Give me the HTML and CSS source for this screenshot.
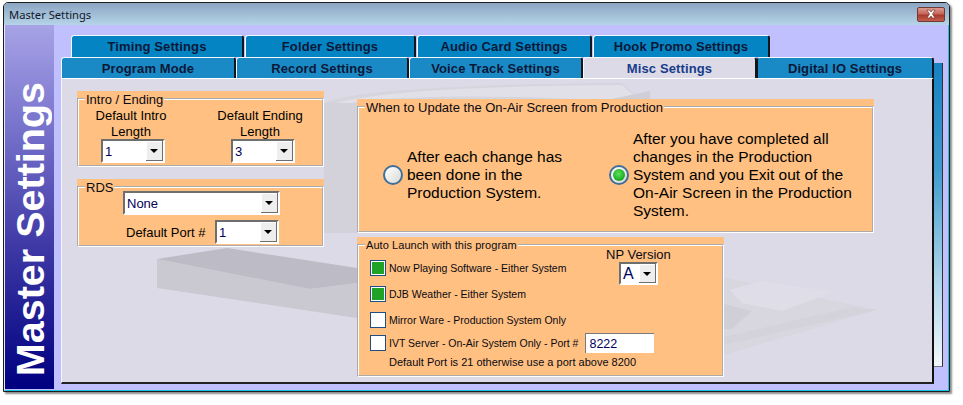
FILE: index.html
```html
<!DOCTYPE html>
<html lang="en">
<head>
<meta charset="utf-8">
<title>Master Settings</title>
<link rel="stylesheet" href="styles.css">
</head>
<body>
<div class="window">
  <div class="titlebar">
    <span class="title">Master Settings</span>
    <div class="close"><svg width="18" height="10" viewBox="0 0 18 10"><path d="M5 1h2.500L9 3l1.500-2H13l-2.500 4L13 9h-2.500L9 7 7.500 9H5l2.500-4z" fill="#fff" stroke="#7a3a34" stroke-width=".7"/></svg></div>
  </div>
  <div class="client">
    <div class="band"><span class="band-text">Master Settings</span></div>
    <div class="tabarea">
      <div class="strip"></div>
      <div class="tabrow back">
        <div class="tab t1">Timing Settings</div>
        <div class="tab t2">Folder Settings</div>
        <div class="tab t3">Audio Card Settings</div>
        <div class="tab t4">Hook Promo Settings</div>
      </div>
      <div class="tabrow front">
        <div class="tab f1">Program Mode</div>
        <div class="tab f2">Record Settings</div>
        <div class="tab f3">Voice Track Settings</div>
        <div class="tab f4 active">Misc Settings</div>
        <div class="tab f5">Digital IO Settings</div>
      </div>
      <div class="panel">
        <svg class="watermark" width="872" height="304" viewBox="0 0 872 304">
          <path d="M262 24 Q300 6 560 4 L600 40 L262 60 Z" fill="#d6d5de"/>
          <path d="M262 30 Q290 8 560 6 L580 24 Q400 12 300 22 Z" fill="#e1e0e9"/>
          <path d="M262 24 h34 v130 h-34z" fill="#d3d2da"/>
          <path d="M540 22 L588 12 L590 60 L540 60 Z" fill="#cfced7"/>
          <path d="M95 180 L248 210 L295 204 V239 L95 209 Z" fill="#cac8d0"/>
          <path d="M95 180 L165 169 L295 189 V204 L248 210 Z" fill="#bdbbc5"/>
          <path d="M662 198 L815 231 L662 276 Z" fill="#d8d7e0"/>
          <path d="M662 266 L815 231 L790 228 L662 258 Z" fill="#d4d3dc"/>
          <path d="M668 211 L700 202 L770 213 L720 232 L680 224 Z" fill="#dfdee8"/>
          <path d="M662 225 L690 232 L670 250 L662 250 Z" fill="#d0cfd8"/>
        </svg>
        <div class="panel-body">
          <div class="col-left">
            <div class="group intro-group">
              <fieldset class="box">
                <legend class="legend">Intro / Ending</legend>
                <div class="intro">
                  <div class="intro-col">
                    <div class="intro-label">Default Intro<br>Length</div>
                    <div class="combo small"><span class="combo-value">1</span><span class="arrow"></span></div>
                  </div>
                  <div class="intro-col">
                    <div class="intro-label">Default Ending<br>Length</div>
                    <div class="combo small second"><span class="combo-value">3</span><span class="arrow"></span></div>
                  </div>
                </div>
              </fieldset>
            </div>
            <div class="group rds">
              <fieldset class="box">
                <legend class="legend">RDS</legend>
                <div class="rds-body">
                  <div class="combo wide"><span class="combo-value">None</span><span class="arrow"></span></div>
                  <div class="port-row">
                    <span class="port-label">Default Port #</span>
                    <div class="combo small"><span class="combo-value">1</span><span class="arrow"></span></div>
                  </div>
                </div>
              </fieldset>
            </div>
          </div>
          <div class="col-right">
            <div class="group when">
              <fieldset class="box">
                <legend class="legend">When to Update the On-Air Screen from Production</legend>
                <div class="options">
                  <div class="option">
                    <span class="radio"></span>
                    <span class="option-text">After each change has been done in the Production System.</span>
                  </div>
                  <div class="option">
                    <span class="radio on"></span>
                    <span class="option-text">After you have completed all changes in the Production System and you Exit out of the On-Air Screen in the Production System.</span>
                  </div>
                </div>
              </fieldset>
            </div>
            <div class="group auto">
              <fieldset class="box">
                <legend class="legend auto-legend">Auto Launch with this program</legend>
                <div class="auto-grid">
                  <div class="check-row"><span class="check on"></span><span>Now Playing Software - Either System</span></div>
                  <div class="np">
                    <div class="np-label">NP Version</div>
                    <div class="combo np-combo"><span class="combo-value">A</span><span class="arrow"></span></div>
                  </div>
                  <div class="check-row"><span class="check on"></span><span>DJB Weather - Either System</span></div>
                  <div class="check-row full"><span class="check"></span><span>Mirror Ware - Production System Only</span></div>
                  <div class="check-row full"><span class="check"></span><span>IVT Server - On-Air System Only - Port #</span><span class="port-input">8222</span></div>
                  <div class="note">Default Port is 21 otherwise use a port above 8200</div>
                </div>
              </fieldset>
            </div>
          </div>
        </div>
      </div>
    </div>
  </div>
</div>
</body>
</html>
```
FILE: styles.css
```css
* { box-sizing: border-box; }
html, body { margin: 0; padding: 0; background: #fff; }
body { width: 963px; height: 405px; overflow: hidden; font-family: "Liberation Sans", Arial, sans-serif; color: #000; }

.window {
  margin: 2px 0 0 3px;
  width: 947px;
  height: 390px;
  border: 1px solid #1c1c1c;
  border-radius: 5px 5px 0 0;
  box-shadow: 2px 2px 2px rgba(0,0,0,.45);
  display: flex;
  flex-direction: column;
  overflow: hidden;
}
.titlebar {
  height: 22px;
  flex: none;
  display: flex;
  align-items: center;
  padding: 0 4px 0 5px;
  background: linear-gradient(#8ba5c2, #b6d4e8);
}
.title { font: 11.200px "Noto Sans", sans-serif; color: #10182a; }
.close {
  margin-left: auto;
  width: 28px;
  height: 15px;
  border: 1px solid #6e3a36;
  border-radius: 2px;
  background: linear-gradient(#dd9a90 0%, #c5675c 45%, #a83a2c 55%, #c4604f 100%);
  display: flex;
  align-items: center;
  justify-content: center;
}
.client {
  flex: 1;
  display: flex;
  background: #c0c0ff;
  border-left: 1px solid #e8e8f8;
  border-right: 1px solid #16c4e6;
  border-bottom: 1px solid #16c4e6;
  min-height: 0;
}
.band {
  width: 49px;
  flex: none;
  margin-bottom: 1px;
  background: linear-gradient(#a7a3e6 0%, #7d78cf 25%, #3f3aa6 60%, #000080 100%);
  display: flex;
  justify-content: center;
  align-items: flex-end;
  padding-bottom: 13px;
}
.band-text {
  writing-mode: vertical-rl;
  transform: rotate(180deg);
  font-weight: bold;
  font-size: 39.500px;
  line-height: 44px;
  color: #fff;
  white-space: nowrap;
}
.tabarea {
  position: relative;
  flex: 1;
  padding: 10px 0 0 7px;
}
.strip {
  position: absolute;
  left: 880px;
  top: 38px;
  width: 9px;
  height: 304px;
  background: linear-gradient(#1681c2, #3f9bcf 35%, #a8d3e9 70%, #f2f8fb);
  border-right: 1px solid #333;
  border-bottom: 1px solid #777;
}
.tabrow { display: flex; position: relative; }
.back { height: 22px; padding-left: 10px; gap: 1px; }
.front { height: 21px; }
.tab {
  font-weight: bold;
  font-size: 13px;
  letter-spacing: .12px;
  color: #0a1838;
  display: flex;
  align-items: center;
  justify-content: center;
  border-top: 1px solid #f4f8fc;
  border-left: 1px solid #f4f8fc;
  border-right: 2px solid #14141c;
  border-radius: 3px 3px 0 0;
}
.back .tab { background: #0584c4; }
.front .tab { background: #1a8ac6; }
.t1 { width: 173px; }
.t2 { width: 171px; }
.t3 { width: 175px; }
.t4 { width: 177px; }
.f1 { width: 175px; }
.f2 { width: 173px; }
.f3 { width: 174px; }
.f4 { width: 174px; }
.f5 { width: 177px; }
.front .tab.active {
  background: #dcdae6;
  color: #173c8c;
  border-right-color: #14141c;
}
.panel {
  position: relative;
  width: 873px;
  height: 306px;
  background: #dcdae6;
  border-top: 1px solid #fff;
  border-left: 1px solid #f4f4fc;
  border-right: 2px solid #111;
  border-bottom: 2px solid #222;
  overflow: hidden;
}
.front .tab.active + .tab { border-left-color: #14141c; }
.watermark { position: absolute; left: 0; top: 0; }
.panel-body {
  position: relative;
  display: flex;
  padding: 12px 0 0 15px;
}
.col-left { width: 247px; flex: none; display: flex; flex-direction: column; gap: 12px; }
.col-right { margin-left: 33px; padding-top: 8px; display: flex; flex-direction: column; gap: 4px; }

.group { background: #ffc081; }
.box {
  margin: 0;
  padding: 0;
  min-width: 0;
  border: 2px groove #fff;
  height: 100%;
}
.legend {
  margin-left: 6px;
  padding: 1px 1px 0;
  font-size: 13px;
  line-height: 15px;
  color: #0a0a14;
}
.auto-legend { font-size: 11px; letter-spacing: .07px; }

.intro { display: flex; gap: 29px; padding: 0 0 3px 2px; }
.intro-col { width: 100px; }
.intro-label { font-size: 13px; line-height: 16px; text-align: center; height: 32px; padding-top: 1px; }
.intro-group { height: 76px; }
.rds { height: 68px; }

.combo {
  display: flex;
  align-items: center;
  height: 24px;
  background: #fff;
  border-top: 2px solid #6e6e6e;
  border-left: 2px solid #6e6e6e;
  border-right: 2px solid #fff;
  border-bottom: 2px solid #fff;
  font-size: 13px;
}
.combo-value { flex: 1; padding-left: 2px; color: #00005a; }
.arrow {
  position: relative;
  width: 17px;
  height: 100%;
  flex: none;
  background: #eeeeee;
  box-shadow: inset -1px -1px 0 #6e6e6e, inset 1px 1px 0 #fff;
}
.arrow::after {
  content: "";
  position: absolute;
  left: 4px;
  top: 8px;
  border-left: 4px solid transparent;
  border-right: 4px solid transparent;
  border-top: 4px solid #000;
}
.small { width: 64px; margin-left: 20px; }
.small.second { margin-left: 21px; }
.wide { width: 157px; margin: -4px 0 0 44px; }
.port-row { display: flex; align-items: center; margin: 5px 0 0 47px; }
.port-label { font-size: 13px; width: 89px; flex: none; }
.port-row .small { margin-left: 0; }

.when { width: 517px; height: 134px; }
.options { display: flex; align-items: center; height: 118px; padding: 2px 0 0 24px; }
.option { width: 226px; display: flex; align-items: center; flex: none; gap: 4px; }
.option-text { font-size: 15.500px; line-height: 18px; width: 224px; flex: none; }
.option:first-child .option-text { width: 165px; }
.radio {
  width: 20px;
  height: 20px;
  flex: none;
  border-radius: 50%;
  border: 2px solid #3f6f98;
  background: linear-gradient(135deg, #ffffff, #d9d9d6);
  display: flex;
  align-items: center;
  justify-content: center;
}
.radio.on::after {
  content: "";
  width: 12px;
  height: 12px;
  border-radius: 50%;
  background: radial-gradient(circle at 45% 40%, #5ee05e, #17a91e 70%, #0f8a16);
}

.auto { width: 367px; height: 140px; }
.auto-grid {
  display: grid;
  grid-template-columns: 236px 1fr;
  grid-template-rows: 27px 26px 26px 20px 18px;
  padding: 1px 0 0 11px;
  font-size: 10.500px;
  color: #0a0a14;
}
.check-row { display: flex; align-items: center; gap: 3px; white-space: nowrap; }
.check-row.full { grid-column: 1 / span 2; }
.check {
  width: 16px;
  height: 16px;
  flex: none;
  border: 1px solid #1f4f80;
  background: #fff;
}
.check.on { background: #1fa226; box-shadow: inset 0 0 0 1px #fff; }
.np { grid-row: 1 / span 2; grid-column: 2; }
.np-label { font-size: 13px; line-height: 15px; margin-top: -7px; }
.np-combo { width: 39px; height: 23px; margin-left: 13px; font-size: 16px; }
.port-input {
  width: 69px;
  height: 20px;
  margin-left: 4px;
  background: #fff;
  font-size: 12.500px;
  line-height: 18px;
  padding: 1px 0 0 3px;
  border-top: 1px solid #7a7a7a;
  border-left: 1px solid #7a7a7a;
  color: #00005a;
}
.note {
  grid-column: 1 / span 2;
  font-size: 11px;
  line-height: 18px;
  padding-left: 19px;
  white-space: nowrap;
}
```
